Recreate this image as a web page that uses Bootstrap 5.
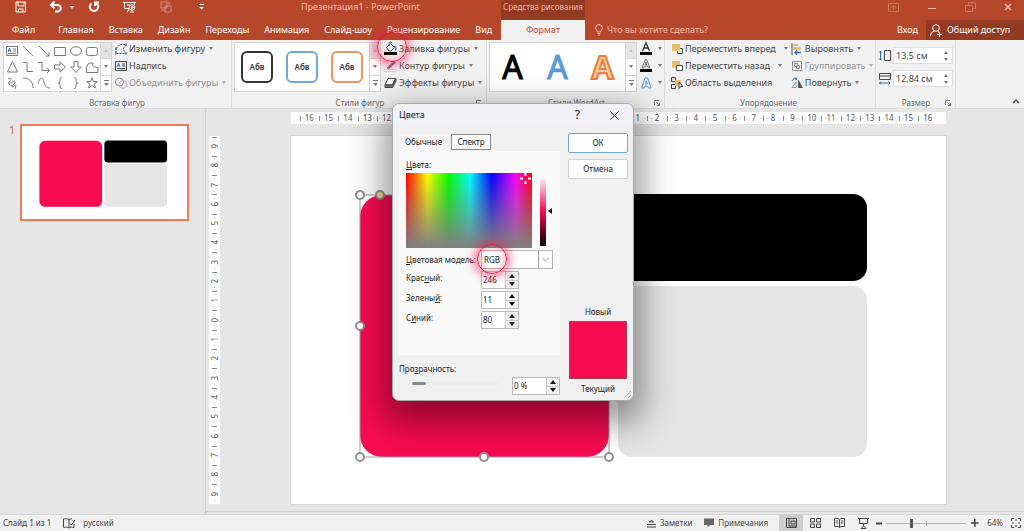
<!DOCTYPE html>
<html lang="ru">
<head>
<meta charset="utf-8">
<meta name="viewport" content="width=device-width, initial-scale=1">
<title>Презентация1 - PowerPoint</title>
<link href="https://cdn.jsdelivr.net/npm/bootstrap@5.3.0/dist/css/bootstrap.min.css" rel="stylesheet">
<style>
:root { --brand:#b7472a; --brand-dark:#933a22; --ribbon:#f1f1f1; --line:#d8d8d8; --txt:#444; }
body { font-family:"Noto Sans","Open Sans",sans-serif; font-size:9px; line-height:12px; color:var(--txt); background:#e6e6e6; }
button, input, select { font:inherit; color:inherit; }
button { border:0; background:none; padding:0; }
svg { display:block; flex:none; fill:none; stroke:currentColor; overflow:visible; }
.caret { width:0; height:0; flex:none; border:2px solid transparent; border-top:3px solid #777; border-bottom:0; margin-left:4px; }
.up { transform:rotate(180deg); }
.brandbar { background:var(--brand); color:#fff; }
.titlebar { height:20px; }
.titlebar > * { padding-bottom:6px; }
.titlebar .caret { border-top-color:#fff; margin:0; }
.lead-part { width:501px; }
.quick { width:301px; padding-left:15px; }
.quick button { height:12px; }
.quick button + button { margin-left:23px; }
.quick .undo + button { margin-left:14px; }
.faded, .tabrow a.faded { color:#efbfb0; }
.dim { opacity:.4; }
.ctx { width:84px; background:var(--brand-dark); color:#e9b9a8; font-size:8px; }
.tabrow { height:20px; }
.tabrow .lead-part { padding-left:12px; gap:15px; }
.tabrow a { color:#fff; text-decoration:none; }
.tabrow a.on { width:84px; background:var(--ribbon); color:#c8451f; }
.tabrow .ask { padding-left:10px; }
.share { width:98px; background:var(--brand-dark); }
.ribbon { background:var(--ribbon); height:69px; border-bottom:1px solid #dcdcdc; }
.rgroup { border-right:1px solid #dcdcdc; padding-left:3px; }
.g-insert { width:232px; } .g-style { width:255px; padding-left:2px; } .g-art { width:178px; padding-left:2px; } .g-order { width:211px; padding-right:6px; } .g-size { width:80px; padding-right:2px; }
.rcontent { height:54px; }
.rlabel { padding-top:3px; color:#6b6b6b; font-size:8px; }
.launch { position:absolute; right:4px; bottom:2px; color:#777; }
.gallery { border:1px solid #d4d4d4; background:#fff; margin-top:2px; height:50px; }
.shapes { display:grid; grid-template-columns:repeat(6,16px); grid-template-rows:repeat(3,16px); color:#777; }
.shapes button { display:grid; place-items:center; }
.scroller { width:11px; border-left:1px solid #d4d4d4; }
.scroller button { flex:1; display:grid; place-items:center; border-bottom:1px solid #d4d4d4; }
.scroller button:last-child { border-bottom:0; }
.scroller button:first-child { background:#e4e4e4; }
.scroller .caret { margin:0; }
.scroller .up { opacity:.3; }
.cmds { padding-left:3px; }
.cmds button { height:17px; display:flex; align-items:center; white-space:nowrap; }
.cmds svg { margin-right:2px; }
.off { opacity:.55; }
.samples { gap:13px; padding:0 6px; }
.sample { width:32px; height:32px; border-radius:6px; background:#fff; }
.sample.s-black { border:2px solid #333; } .sample.s-blue { border:2px solid #6ea8dc; } .sample.s-orange { border:2px solid #f2935a; }
.sample span { color:#333; font-weight:600; font-size:8px; }
.artA { font-size:32px; line-height:40px; width:45px; }
.a-black { color:#000; -webkit-text-stroke:1px #000; }
.a-blue { color:#5b9bd5; -webkit-text-stroke:1px #5b9bd5; }
.a-orange { color:#f8cbad; font-weight:700; -webkit-text-stroke:2px #ed7d31; }
.spin { background:#fff; border:1px solid #dedede; width:60px; height:17px; }
.spin input { border:0; min-width:0; width:44px; padding:0 2px; outline:0; background:none; }
.sizes { gap:6px; }
.highlight { position:absolute; width:30px; height:30px; border:1px solid #f0142c; border-radius:50%; box-shadow:0 0 8px 4px rgba(240,30,90,.5), inset 0 0 6px 2px rgba(240,30,90,.28); pointer-events:none; z-index:4; }
.highlight.on-fill { left:-7px; top:-8px; }
.highlight.on-model { left:71px; top:-6px; }
.work { min-height:0; }
.thumbs { width:206px; padding:15px 0 0 9px; border-right:1px solid #cfcfcf; }
.thumbs .num { width:11px; font-size:11px; color:#d8613f; }
.thumbs .pic { width:169px; border:2px solid #f07a5a; background:#fff; }
.stage { display:grid; grid-template-columns:3px 11px 71px 1fr 78px; grid-template-rows:3px 12px 12px auto 1fr; border-bottom:1px solid #d0d0d0; margin-bottom:2px; }
.ruler { background:#fff; display:flex; justify-content:center; font-size:8px; color:#555; overflow:hidden; }
.ruler i { font-style:normal; }
.ruler span { flex:0 0 calc(100% / 33.867); display:grid; place-items:center; line-height:12px;
  background:linear-gradient(#888,#888) 0 50%/1px 5px no-repeat, linear-gradient(#bbb,#bbb) 18% 50%/1px 1px no-repeat, linear-gradient(#bbb,#bbb) 85% 50%/1px 1px no-repeat; }
.ruler.h { grid-area:2/4; } .ruler.v { grid-area:4/2; flex-direction:column; align-items:center; }
.ruler.v span { flex-basis:calc(100% / 19.05); width:11px;
  background:linear-gradient(#888,#888) 50% 0/5px 1px no-repeat, linear-gradient(#bbb,#bbb) 50% 18%/1px 1px no-repeat, linear-gradient(#bbb,#bbb) 50% 85%/1px 1px no-repeat; }
.ruler.v i { writing-mode:vertical-rl; transform:rotate(180deg); line-height:11px; }
.slide { grid-area:4/4; background:#fff; outline:1px solid #d4d4d4; }
.slide svg, .pic svg { width:100%; height:auto; stroke:none; }
.dlg { position:absolute; left:calc(50% + 1px); top:103px; transform:translateX(-50%); width:242px; height:298px; background:#f0f0f0; border:1px solid #a8a8a8; border-radius:7px; box-shadow:0 14px 34px 8px rgba(0,0,0,.42); color:#222; font-size:8px; z-index:3; }
.dlg header { height:22px; background:#f3f1f8; border-radius:7px 7px 0 0; padding:0 14px 0 6px; font-size:9px; }
.dlg .help { font-size:12px; margin-right:26px; }
.dmain { width:161px; margin-left:6px; }
.dtabs { height:19px; margin-top:6px; }
.dtabs button { height:16px; padding:0 6px; background:#f5f5f5; }
.dtabs button.on { border:1px solid #8a8a8a; background:#f9f9f9; padding:0; margin-left:3px; width:40px; }
.panel { height:204px; background:#f9f9f9; padding:8px 6px 0 7px; }
.cap, .picker { margin-bottom:2px; }
.spectrum { width:126px; height:75px; background:linear-gradient(to bottom,rgba(128,128,128,0),#808080), linear-gradient(to right,#f00,#ff0 17%,#0f0 34%,#0ff 51%,#00f 68%,#f0f 87%,#f00); }
.spectrum svg { position:absolute; left:114px; top:0; stroke:#fff; }
.lum { width:6px; height:70px; background:linear-gradient(#fff,#f60b50 50%,#000); }
.arrow { border:3px solid transparent; border-right:4px solid #111; border-left:0; margin-left:2px; }
.mrow { height:19px; }
.mrow label, .num-row label { width:75px; white-space:nowrap; }
.num-row label { padding-top:1px; }
.mrow select { appearance:none; width:72px; height:19px; padding:0 2px; border:1px solid #b5b5b5; border-radius:0; outline:0;
  background:#fff url("data:image/svg+xml,%3Csvg xmlns='http://www.w3.org/2000/svg' width='14' height='17'%3E%3Cpath d='M.5 0v17M4.500 7l3 3 3-3' fill='none' stroke='%23999'/%3E%3C/svg%3E") right center no-repeat; }
.num-row { height:18px; margin-top:2px; }
.dspin { display:flex; height:18px; width:38px; border:1px solid #b9b9b9; background:#fff; }
.dspin input { border:0; flex:1; min-width:0; padding:0 1px; outline:0; background:none; }
.dspin .st { width:13px; border-left:1px solid #c9c9c9; background:#f4f4f4; }
.dspin .st button { flex:1; display:grid; place-items:center; }
.dspin .st button + button { border-top:1px solid #c9c9c9; }
.dspin .caret { border-width:3px; border-top:4px solid #111; border-bottom:0; margin:0; }
.dspin.wide { width:48px; }
.opacity-row { margin-top:2px; padding-left:9px; }
.dside { width:60px; margin:7px 5px 0 0; }
.dside .act { width:60px; height:20px; border:1px solid #d0d0d0; border-radius:2px; background:#fdfdfd; }
.dside .act.main { border-color:#6fa8d8; margin-bottom:6px; }
.swatch { width:58px; height:58px; background:#f90b50; border:1px solid #a0405c; margin:3px 0 4px; }
.grip { position:absolute; right:1px; bottom:1px; color:#aaa; }
input[type=range] { appearance:none; background:none; margin:0; height:12px; }
.opacity-range { width:86px; }
.opacity-range::-webkit-slider-runnable-track { height:3px; background:#ececec; }
.opacity-range::-webkit-slider-thumb { appearance:none; width:14px; height:3px; border-radius:2px; background:#888; }
input.zoom-range { width:80px; margin:0 5px 0 3px; background:linear-gradient(#aaa,#aaa) 50% 50%/1px 5px no-repeat; }
.zoom-range::-webkit-slider-runnable-track { height:1px; background:#b5b5b5; }
.zoom-range::-webkit-slider-thumb { appearance:none; width:3px; height:9px; margin-top:-4px; background:#555; }
.status { height:17px; background:#f1f1f1; border-top:1px solid #d6d6d6; font-size:8px; padding:0 3px; }
.status button { display:flex; align-items:center; height:16px; }
.status .gap-l { margin-left:12px; }
.view { width:24px; justify-content:center; }
.view.on { background:#cdcdcd; margin-left:11px; }
.minus { padding-left:1px; }
</style>
</head>
<body class="d-flex flex-column vh-100 overflow-hidden position-relative">

<header class="brandbar">
  <div class="titlebar d-flex">
    <div class="lead-part d-flex align-items-center">
      <div class="quick d-flex align-items-center">
        <button aria-label="Сохранить"><svg width="12" height="12"><path d="M1 1h9.500v10H1zM3 1v4h6V1M3.500 11V8h4.500v3"/></svg></button>
        <button class="undo d-flex align-items-center" aria-label="Отменить"><svg width="12" height="12" stroke-width="2"><path d="M1 4h6.500a3.200 3.200 0 0 1 0 6.500H5M4.500 0.500L1 4l3.500 3.500"/></svg><span class="caret ms-2"></span></button>
        <button aria-label="Повторить"><svg width="12" height="12" stroke-width="2"><path d="M3.500 2.500a4.200 4.200 0 1 0 5 0M7 5V1.500h4"/></svg></button>
        <button aria-label="С начала"><svg width="14" height="12"><path d="M0 1.500h13M1.500 1.500v6H6M11.500 1.500V4M6.500 7.500L4 11.500M4 4h3"/><circle cx="9" cy="6.500" r="2.800"/><path d="M8.500 5.300l2 1.200-2 1.200z" fill="#fff"/><path d="M7 11h4"/></svg></button>
        <button class="dim" aria-label="Группировать"><svg width="12" height="12"><path d="M1 1h6v6H1zM5 5h6v6H5zM9 1v3M1 9h3"/></svg></button>
        <button class="ps-1" aria-label="Настройка панели"><svg width="6" height="8"><path d="M0 1.500h5"/><path d="M0 4h5L2.500 6.500z" fill="#fff" stroke="none"/></svg></button>
      </div>
      <div class="faded text-nowrap">Презентация1 - PowerPoint</div>
    </div>
    <div class="ctx d-flex align-items-center justify-content-center text-nowrap">Средства рисования</div>
    <div class="ms-auto d-flex align-items-center gap-4 faded pe-2 me-1">
      <button class="dim" aria-label="Параметры ленты"><svg width="12" height="9"><path d="M.5.5h10v8H.5zM5.500 7V3M3.500 4.500l2-2 2 2"/></svg></button>
      <button class="ms-1" aria-label="Свернуть"><svg width="9" height="8"><path d="M0 5.500h8"/></svg></button>
      <button class="dim ms-1" aria-label="Восстановить"><svg width="11" height="10"><path d="M.5 3.500h7v6h-7zM3.500 3V.5h7v6h-3"/></svg></button>
      <button class="ms-1" aria-label="Закрыть"><svg width="8" height="8" stroke-width="1.500"><path d="M1 1l6 6M7 1L1 7"/></svg></button>
    </div>
  </div>
  <nav class="tabrow d-flex">
    <div class="lead-part d-flex align-items-center text-nowrap">
      <a href="#" class="me-2">Файл</a><a href="#">Главная</a><a href="#">Вставка</a><a href="#">Дизайн</a><a href="#">Переходы</a><a href="#">Анимация</a><a href="#">Слайд-шоу</a><a href="#">Рецензирование</a><a href="#">Вид</a>
    </div>
    <a href="#" class="on d-flex align-items-center justify-content-center">Формат</a>
    <a href="#" class="faded ask d-flex align-items-center gap-1 text-nowrap"><svg width="8" height="12"><path d="M2.500 8C2.500 6.500.7 6 .7 3.800a3.300 3.300 0 0 1 6.600 0C7.300 6 5.500 6.500 5.500 8zM2.500 9.500h3M3 11h2"/></svg>Что вы хотите сделать?</a>
    <a href="#" class="ms-auto d-flex align-items-center pe-2">Вход</a>
    <a href="#" class="share d-flex align-items-center gap-1 ps-1 text-nowrap"><svg width="13" height="13"><circle cx="6" cy="4" r="3.300"/><path d="M.5 12c0-3 2-4.700 4-4.700M7.500 7.200l2 1.300M9.500 8v5M7 10.500h5"/></svg>Общий доступ</a>
  </nav>
</header>

<section class="ribbon d-flex position-relative">
  <div class="rgroup g-insert">
    <div class="rcontent d-flex align-items-start">
      <div class="gallery d-flex">
        <div class="shapes">
          <button aria-label="Надпись"><svg width="12" height="10"><path d="M.5.5h11v9H.5zM7 3h3M7 5h3M2 7.500h8"/><path d="M2 6l1.500-4L5 6M2.500 4.700h2" stroke="#3b78b8"/></svg></button>
          <button aria-label="Линия"><svg width="12" height="12"><path d="M1 1l10 10"/></svg></button>
          <button aria-label="Стрелка"><svg width="12" height="12"><path d="M1 1l10 10M11 7.500V11H7.500"/></svg></button>
          <button aria-label="Прямоугольник"><svg width="12" height="9"><path d="M.5.5h11v8H.5z"/></svg></button>
          <button aria-label="Овал"><svg width="12" height="10"><ellipse cx="6" cy="5" rx="5.500" ry="4.300"/></svg></button>
          <button aria-label="Скругленный прямоугольник"><svg width="12" height="9"><rect x=".5" y=".5" width="11" height="8" rx="2"/></svg></button>
          <button aria-label="Треугольник"><svg width="11" height="12"><path d="M5.500.5l5 10.500h-10z"/></svg></button>
          <button aria-label="Соединитель"><svg width="12" height="12"><path d="M1 1.500h4v9h6"/></svg></button>
          <button aria-label="Соединитель со стрелкой"><svg width="12" height="12"><path d="M0 1.500h4v8h7M9 7l2.500 2.500L9 12"/></svg></button>
          <button aria-label="Стрелка вправо"><svg width="12" height="12"><path d="M.5 4h5.500V.8L11.500 6 6 11.200V8H.5z"/></svg></button>
          <button aria-label="Стрелка вниз"><svg width="12" height="12"><path d="M4 .5v5.500H.8L6 11.500 11.200 6H8V.5z"/></svg></button>
          <button aria-label="Фигура"><svg width="13" height="11"><path d="M.5 5L3 1h4c-1 3 1 4.500 5 4.500v5H.5z"/></svg></button>
          <button aria-label="Каракули"><svg width="10" height="12"><path d="M1 2c3-2 4 0 2 2s-1 3 2 1 4 0 2 2-3 4 0 2 2 0 1 3M1 6c2 0 1 3 4 3"/></svg></button>
          <button aria-label="Дуга"><svg width="12" height="12"><path d="M1 1c7 0 10 4 10 10"/></svg></button>
          <button aria-label="Кривая"><svg width="13" height="12"><path d="M0 7c2-8 5-7 6-2s3 6 6 6"/></svg></button>
          <button aria-label="Левая скобка"><svg width="6" height="12"><path d="M5 .5C3 .5 3 1.500 3 3.500S2.500 6 1 6c1.500 0 2 .5 2 2.500s0 3 2 3"/></svg></button>
          <button aria-label="Правая скобка"><svg width="6" height="12"><path d="M1 .5c2 0 2 1 2 3S3.500 6 5 6C3.500 6 3 6.500 3 8.500s0 3-2 3"/></svg></button>
          <button aria-label="Звезда"><svg width="12" height="12"><path d="M6 .7l1.400 3.800h4L8.200 7l1.200 4L6 8.700 2.600 11l1.200-4L.6 4.500h4z"/></svg></button>
        </div>
        <div class="scroller d-flex flex-column"><button aria-label="Вверх"><span class="caret up"></span></button><button aria-label="Вниз"><span class="caret"></span></button><button aria-label="Ещё"><svg width="5" height="6"><path d="M0 .5h5" stroke="#777"/><path d="M0 3h5L2.500 6z" fill="#777" stroke="none"/></svg></button></div>
      </div>
      <div class="cmds">
        <button><svg width="12" height="12" stroke="#4a8ac8"><path d="M1 5.500L5 1.500h6L8 6l3 4.500H1z" stroke-dasharray="2 1"/><path d="M0 4.500h2v2H0zM10 .5h2v2h-2zM10 9.500h2v2h-2zM0 9.500h2v2H0z" fill="#4a8ac8" stroke="none"/></svg>Изменить фигуру<span class="caret"></span></button>
        <button><svg width="12" height="10"><path d="M.5.5h11v9H.5zM7 3h3M7 5h3M2 7.500h8"/><path d="M2 6l1.500-4L5 6M2.500 4.700h2" stroke="#3b78b8"/></svg>Надпись</button>
        <button class="off"><svg width="12" height="12"><circle cx="4.500" cy="5" r="4"/><circle cx="8" cy="7.500" r="4" stroke="#b06aa8"/></svg>Объединить фигуры<span class="caret"></span></button>
      </div>
    </div>
    <div class="rlabel text-center">Вставка фигур</div>
  </div>

  <div class="rgroup g-style position-relative">
    <div class="rcontent d-flex align-items-start">
      <div class="gallery d-flex">
        <div class="samples d-flex align-items-center">
          <button class="sample s-black"><span>Абв</span></button>
          <button class="sample s-blue"><span>Абв</span></button>
          <button class="sample s-orange"><span>Абв</span></button>
        </div>
        <div class="scroller d-flex flex-column"><button aria-label="Вверх"><span class="caret up"></span></button><button aria-label="Вниз"><span class="caret"></span></button><button aria-label="Ещё"><svg width="5" height="6"><path d="M0 .5h5" stroke="#777"/><path d="M0 3h5L2.500 6z" fill="#777" stroke="none"/></svg></button></div>
      </div>
      <div class="cmds">
        <button class="position-relative"><svg width="13" height="13"><path d="M2.500 5.500l4-4 4 4-3.500 3.500H5zM5 4V1.500a1.500 1.500 0 0 1 3 0"/><path d="M10 4.500c2 0 2 2 1.500 4" stroke="#3b78b8" stroke-width="1.500"/><path d="M0 10h13v3H0z" fill="#000" stroke="none"/></svg>Заливка фигуры<span class="caret"></span><span class="highlight on-fill"></span></button>
        <button><svg width="13" height="13"><path d="M3 9l7-7 1.500 1.500-7 7z" fill="#777" stroke="#6d5a90" stroke-width=".5"/><path d="M0 10.500h12v2H0z" fill="#fff" stroke="#c8c0d8" stroke-width=".6"/></svg>Контур фигуры<span class="caret"></span></button>
        <button><svg width="13" height="12" stroke="#777"><path d="M1 8l3-6.500h7.500L8.500 8z" fill="#fff"/><path d="M1 8v2.500h7.500L12 4V1.500L8.500 8z" fill="#777"/></svg>Эффекты фигуры<span class="caret"></span></button>
      </div>
    </div>
    <div class="rlabel text-center">Стили фигур</div>
    <svg class="launch" width="6" height="6"><path d="M.5 5V.5H5M2.500 2.500L5 5M5.500 3v2.500H3"/></svg>
  </div>

  <div class="rgroup g-art position-relative">
    <div class="rcontent d-flex align-items-start">
      <div class="gallery d-flex">
        <div class="d-flex align-items-center">
          <button class="artA a-black">A</button>
          <button class="artA a-blue">A</button>
          <button class="artA a-orange">A</button>
        </div>
        <div class="scroller d-flex flex-column"><button aria-label="Вверх"><span class="caret up"></span></button><button aria-label="Вниз"><span class="caret"></span></button><button aria-label="Ещё"><svg width="5" height="6"><path d="M0 .5h5" stroke="#777"/><path d="M0 3h5L2.500 6z" fill="#777" stroke="none"/></svg></button></div>
      </div>
      <div class="cmds">
        <button aria-label="Заливка текста"><svg width="12" height="13"><path d="M2.500 9L6 .8 9.500 9M4 6h4" stroke="#333" stroke-width="1.300"/><path d="M0 10h12v3H0z" fill="#000" stroke="none"/></svg><span class="caret"></span></button>
        <button aria-label="Контур текста"><svg width="12" height="13"><path d="M2 9L5.200.8h1.600L10 9H8.500l-.9-2H4.400l-.9 2zM5 5.500h2L6 3z" stroke-width=".7"/><path d="M0 10h12v3H0z" fill="#000" stroke="none"/></svg><span class="caret"></span></button>
        <button aria-label="Эффекты текста"><svg width="12" height="12"><path stroke="#5b9bd5" d="M1.500 11L5 .8h2.500L11 11H8.300l-.6-2H5l-.7 2zM5.300 7h2L6.300 3.800z"/></svg><span class="caret"></span></button>
      </div>
    </div>
    <div class="rlabel text-center">Стили WordArt</div>
    <svg class="launch" width="6" height="6"><path d="M.5 5V.5H5M2.500 2.500L5 5M5.500 3v2.500H3"/></svg>
  </div>

  <div class="rgroup g-order">
    <div class="rcontent d-flex align-items-start">
      <div class="cmds">
        <button><svg width="12" height="12"><path d="M6.500 5.500h5v5h-5z" fill="#fff"/><path d="M1 1h8v7H1z" fill="#e9bd6b" stroke="none"/></svg>Переместить вперед<span class="caret ms-2"></span></button>
        <button><svg width="12" height="12"><path d="M1 1h8v7H1z" fill="#e9bd6b" stroke="none"/><path d="M5.500 5.500h6v5h-6z" fill="#fff"/></svg>Переместить назад<span class="caret ms-2"></span></button>
        <button><svg width="12" height="12"><path d="M.5.5h4v4h-4zM.5 7.500h4v4h-4z"/><path d="M4 3h6v6H4z" fill="#e9bd6b" stroke="none"/><path d="M8 5l4 4.500H9.700L8 11.500z" fill="#fff"/></svg>Область выделения</button>
      </div>
      <div class="cmds ms-auto">
        <button><svg width="12" height="12"><path d="M1 0v12" stroke="#555"/><path d="M2 1h5v2H2zM2 4h8v3H2z" fill="#e9bd6b" stroke="none"/><path d="M10 9.500H4M6 7.500l-2 2 2 2" stroke="#2b6cb5" stroke-width="1.300"/></svg>Выровнять<span class="caret"></span></button>
        <button class="off"><svg width="12" height="12"><path d="M1.500 1.500h9v9h-9zM3.500 3.500h3v3h-3zM5.500 5.500h3v3h-3z"/></svg>Группировать<span class="caret"></span></button>
        <button><svg width="12" height="12"><path d="M7 2v9h5z" fill="#555" stroke="none"/><path d="M5 5v5.500H1z" stroke="#999"/><path d="M1 4c1-2.500 3-3 5-2M4.500 0L6 2 4 3" stroke="#2b6cb5"/></svg>Повернуть<span class="caret"></span></button>
      </div>
    </div>
    <div class="rlabel text-center">Упорядочение</div>
  </div>

  <div class="rgroup g-size position-relative">
    <div class="rcontent sizes d-flex flex-column justify-content-center">
      <label class="d-flex align-items-center justify-content-between"><svg width="12" height="12"><path d="M5.500.5h6v10h-6z"/><path d="M1.500 1v9M0 2.500L1.500 1 3 2.500M0 8.500L1.500 10 3 8.500" stroke="#2b6cb5"/></svg><span class="spin d-flex justify-content-between align-items-center pe-1"><input value="13,5 см" aria-label="Высота"><span><span class="caret up m-0 mb-1 d-block"></span><span class="caret m-0 d-block"></span></span></span></label>
      <label class="d-flex align-items-center justify-content-between"><svg width="12" height="12"><path d="M.5.5h11v6H.5zM.5 3h11"/><path d="M0 10h11M2 8.500L.5 10 2 11.500M9.500 8.500L11 10l-1.500 1.500" stroke="#2b6cb5"/></svg><span class="spin d-flex justify-content-between align-items-center pe-1"><input value="12,84 см" aria-label="Ширина"><span><span class="caret up m-0 mb-1 d-block"></span><span class="caret m-0 d-block"></span></span></span></label>
    </div>
    <div class="rlabel text-center">Размер</div>
    <svg class="launch" width="6" height="6"><path d="M.5 5V.5H5M2.500 2.500L5 5M5.500 3v2.500H3"/></svg>
  </div>
  <button class="ms-auto mt-auto pe-1 pb-1" aria-label="Свернуть ленту"><svg width="8" height="5" stroke-width="1.300"><path d="M1 4l3-3 3 3"/></svg></button>
</section>

<main class="work d-flex flex-grow-1">
  <aside class="thumbs d-flex align-items-start flex-shrink-0">
    <span class="num">1</span>
    <div class="pic">
      <svg viewBox="0 0 655 368"><g id="figures"><rect x="69" y="59" width="249" height="262" rx="22" fill="#f90b50"/><rect x="327" y="58" width="249" height="87" rx="14" fill="#000"/><rect x="327" y="150" width="249" height="171" rx="14" fill="#e5e5e5"/></g></svg>
    </div>
  </aside>
  <section class="stage flex-grow-1">
    <div class="ruler h" data-max="16"></div>
    <div class="ruler v" data-max="9"></div>
    <div class="slide">
      <svg viewBox="0 0 655 368">
        <use href="#figures"/>
        <path d="M69 59h249v262H69z" fill="none" stroke="#999"/>
        <g fill="#fff" stroke="#929292" stroke-width="2"><circle cx="69" cy="59" r="4"/><circle cx="89" cy="59" r="4" fill="#f4dc84"/><circle cx="69" cy="190" r="4"/><circle cx="69" cy="321" r="4"/><circle cx="193" cy="321" r="4"/><circle cx="318" cy="321" r="4"/></g>
      </svg>
    </div>
  </section>
</main>

<footer class="status d-flex align-items-center">
  <span>Слайд 1 из 1</span>
  <button class="gap-l" aria-label="Правописание"><svg width="12" height="11"><path d="M6 1.500C4 .5 2 .5.500 1v8.500c2-.5 4-.5 5.500.5zM6 1.500C7 1 8 .8 9 .8M6 10c1.500-1 3-1 5-.5V6M7 5.500l1.500 1.500L12 2"/></svg></button>
  <span class="ps-2">русский</span>
  <button class="ms-auto gap-1"><svg width="9" height="9"><path d="M0 5.500h9M0 8h9M2.500 3L4.500 1l2 2z"/></svg>Заметки</button>
  <button class="gap-l gap-1"><svg width="10" height="10"><path d="M0 .5h10v6.500H6L3.500 9.500V7H0z" fill="#666" stroke="none"/></svg>Примечания</button>
  <button class="view on" aria-label="Обычный"><svg width="11" height="10"><path d="M.5.5h10v9H.5zM3 .5v9M5 3h4v3H5zM3 8h7"/></svg></button>
  <button class="view" aria-label="Сортировщик"><svg width="11" height="10"><path d="M.5.5h4v3.500h-4zM6.500.5h4v3.500h-4zM.5 6h4v3.500h-4zM6.500 6h4v3.500h-4z"/></svg></button>
  <button class="view" aria-label="Чтение"><svg width="11" height="10"><path d="M5.500 1.500L4 .5H.5v8H4l1.500 1 1.500-1h3.500v-8H7zM5.500 1.500v8M2 3h2M2 5h2M7 3h2M7 5h2"/></svg></button>
  <button class="view" aria-label="Показ слайдов"><svg width="11" height="11"><path d="M0 .5h11M1.500.5v5h8v-5M5.500 5.500V8M3 10.500L5.500 8 8 10.500z"/></svg></button>
  <button class="minus" aria-label="Уменьшить"><svg width="7" height="7" stroke-width="2"><path d="M0 3.500h6"/></svg></button>
  <input type="range" class="zoom-range" min="0" max="100" value="31" aria-label="Масштаб">
  <button aria-label="Увеличить"><svg width="8" height="8" stroke-width="1.500"><path d="M0 4h7.500M3.800 0v8"/></svg></button>
  <span class="px-2">64%</span>
  <button aria-label="Вписать"><svg width="10" height="10"><path d="M.5 3V.5H3M7 .5h2.500V3M9.500 7v2.500H7M3 9.500H.5V7M5 1v2M5 7v2M1 5h2M7 5h2"/></svg></button>
</footer>

<div class="dlg" role="dialog" aria-labelledby="dlg-title">
  <header class="d-flex align-items-center"><span id="dlg-title">Цвета</span><button class="help ms-auto" aria-label="Справка">?</button><button class="ms-1" aria-label="Закрыть окно"><svg width="9" height="9"><path d="M.5.5l8 8M8.500.5l-8 8"/></svg></button></header>
  <div class="d-flex justify-content-between">
    <div class="dmain">
      <div class="dtabs d-flex align-items-center"><button>Обычные</button><button class="on">Спектр</button></div>
      <div class="panel">
        <div class="cap"><u>Ц</u>вета:</div>
        <div class="picker d-flex align-items-center">
          <div class="spectrum position-relative"><svg width="11" height="11" stroke-width="2"><path d="M5.500 0v3M5.500 8v3M0 5.500h3M8 5.500h3"/></svg></div>
          <div class="lum ms-2"></div><div class="arrow"></div>
        </div>
        <div class="mrow d-flex align-items-center position-relative"><label for="model"><u>Ц</u>ветовая модель:</label><select id="model"><option>RGB</option><option>HSL</option></select><span class="highlight on-model"></span></div>
        <div class="num-row d-flex"><label for="r">Крас<u>н</u>ый:</label><span class="dspin"><input id="r" value="246"><span class="st d-flex flex-column"><button aria-label="Больше"><span class="caret up"></span></button><button aria-label="Меньше"><span class="caret"></span></button></span></span></div>
        <div class="num-row d-flex"><label for="g">Зелены<u>й</u>:</label><span class="dspin"><input id="g" value="11"><span class="st d-flex flex-column"><button aria-label="Больше"><span class="caret up"></span></button><button aria-label="Меньше"><span class="caret"></span></button></span></span></div>
        <div class="num-row d-flex"><label for="b">С<u>и</u>ний:</label><span class="dspin"><input id="b" value="80"><span class="st d-flex flex-column"><button aria-label="Больше"><span class="caret up"></span></button><button aria-label="Меньше"><span class="caret"></span></button></span></span></div>
      </div>
      <label for="opa" class="d-block mt-2">Про<u>з</u>рачность:</label>
      <div class="opacity-row d-flex justify-content-between"><input type="range" class="opacity-range ms-1" id="opa" value="0"><span class="dspin wide"><input value="0 %" aria-label="Прозрачность, проценты"><span class="st d-flex flex-column"><button aria-label="Больше"><span class="caret up"></span></button><button aria-label="Меньше"><span class="caret"></span></button></span></span></div>
    </div>
    <div class="dside d-flex flex-column align-items-center">
      <button class="act main">ОК</button><button class="act">Отмена</button>
      <div class="mt-auto">Новый</div><div class="swatch"></div><div>Текущий</div>
    </div>
  </div>
  <svg class="grip" width="8" height="8"><path d="M0 7l7-7M4 7l3-3"/></svg>
</div>

<script>
document.querySelectorAll('.ruler').forEach(r => {
  const m = +r.dataset.max;
  for (let i = -m; i <= m; i++) {
    const s = document.createElement('span'), t = document.createElement('i');
    t.textContent = Math.abs(i);
    s.append(t); r.append(s);
  }
});
</script>
<script src="https://cdn.jsdelivr.net/npm/bootstrap@5.3.0/dist/js/bootstrap.bundle.min.js"></script>
</body>
</html>
